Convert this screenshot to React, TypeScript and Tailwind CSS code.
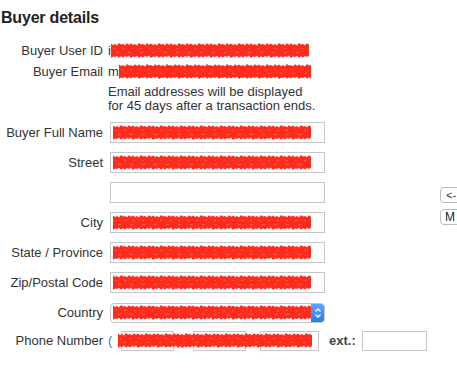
import React from 'react';

const Scribble = ({ w = 198, h = 15 }: { w?: number; h?: number }) => {
  const top: string[] = [];
  const bottom: string[] = [];
  const jitter = [0.5, 2, 1, 2.5, 0, 1.5, 1, 2.2, 0.3, 1.8];
  for (let x = 0, i = 0; x <= w; x += 2, i++) {
    top.push(`${x},${jitter[i % 10]}`);
    bottom.push(`${x},${h - jitter[(i + 4) % 10]}`);
  }
  const d = `M${top.join(' L')} L${bottom.reverse().join(' L')} Z`;
  return (
    <svg width={w} height={h} viewBox={`0 0 ${w} ${h}`} className="block">
      <path d={d} fill="#ff2b1c" />
      <path d={`M2,${h / 2 - 2} L${w - 2},${h / 2 - 2}`} stroke="#ff5a48" strokeWidth="1" strokeDasharray="2 7" />
      <path d={`M5,${h / 2 + 2} L${w - 2},${h / 2 + 2}`} stroke="#ff5a48" strokeWidth="1" strokeDasharray="3 9" />
    </svg>
  );
};

const Label = ({ children }: { children: React.ReactNode }) => (
  <div className="w-[103px] shrink-0 text-right">{children}</div>
);

const Field = ({ label, filled = true }: { label?: string; filled?: boolean }) => (
  <div className="flex items-center h-[21px] mt-[9px]">
    <Label>{label}</Label>
    <div className="ml-[7px] w-[215px] h-[21px] border border-[#c6c6c6] bg-white flex items-center pl-[2px]">
      {filled && <Scribble w={198} h={15} />}
    </div>
  </div>
);

export default function App() {
  return (
    <div className="w-[457px] h-[390px] overflow-hidden bg-white flex font-['Liberation_Sans',Arial,sans-serif] text-[13px] text-[#333]">
      <div className="w-[440px] shrink-0">
        <h2 className="pt-[8px] pl-[1px] h-[28px] text-[16px] font-bold leading-[20px] text-[#222] tracking-[-0.2px]">Buyer details</h2>

        <div className="flex items-center h-[21px] mt-[12px]">
          <Label>Buyer User ID</Label>
          <div className="ml-[5px] flex items-center">
            <span>i</span>
            <Scribble w={198} h={15} />
          </div>
        </div>
        <div className="flex items-center h-[21px]">
          <Label>Buyer Email</Label>
          <div className="ml-[5px] flex items-center">
            <span>m</span>
            <Scribble w={192} h={15} />
          </div>
        </div>
        <div className="pl-[108px] pt-[3px] leading-[14px]">
          Email addresses will be displayed
          <br />
          for 45 days after a transaction ends.
        </div>

        <Field label="Buyer Full Name" />
        <Field label="Street" />
        <Field filled={false} />
        <Field label="City" />
        <Field label="State / Province" />
        <Field label="Zip/Postal Code" />

        <div className="flex items-center h-[21px] mt-[9px]">
          <Label>Country</Label>
          <div className="ml-[7px] w-[215px] h-[20px] border border-[#c6c6c6] rounded-[4px] bg-white flex items-center overflow-hidden">
            <div className="flex-1 pl-[2px]">
              <Scribble w={198} h={15} />
            </div>
            <div className="w-[15px] h-full bg-gradient-to-b from-[#5aa3ff] to-[#2a7cf0] flex items-center justify-center">
              <svg width="8" height="12" viewBox="0 0 8 12">
                <path d="M1.5 4.5 L4 2 L6.5 4.5 M1.5 7.5 L4 10 L6.5 7.5" stroke="white" strokeWidth="1.3" fill="none" />
              </svg>
            </div>
          </div>
        </div>

        <div className="relative flex items-center h-[21px] mt-[7px]">
          <Label>Phone Number</Label>
          <span className="ml-[5px] text-[#4a74b0]">(</span>
          <div className="ml-[9px] w-[53px] h-[20px] border border-[#c6c6c6]" />
          <span className="mx-[7px]">)</span>
          <div className="w-[53px] h-[20px] border border-[#c6c6c6]" />
          <span className="mx-[5px]">-</span>
          <div className="w-[59px] h-[20px] border border-[#c6c6c6]" />
          <span className="ml-[10px] font-bold text-[#444]">ext.:</span>
          <div className="ml-[6px] w-[65px] h-[20px] border border-[#c6c6c6]" />
          <div className="absolute left-[118px] top-[3px]">
            <Scribble w={194} h={15} />
          </div>
        </div>
      </div>

      <div className="mt-[187px] flex flex-col gap-[6px]">
        <button className="w-[40px] h-[16px] border border-[#bbb] rounded-[4px] bg-white text-[11px] leading-[14px] text-left pl-[5px]">&lt;-</button>
        <button className="w-[40px] h-[16px] border border-[#bbb] rounded-[4px] bg-white text-[12px] leading-[14px] text-left pl-[4px] text-[#123]">M</button>
      </div>
    </div>
  );
}
